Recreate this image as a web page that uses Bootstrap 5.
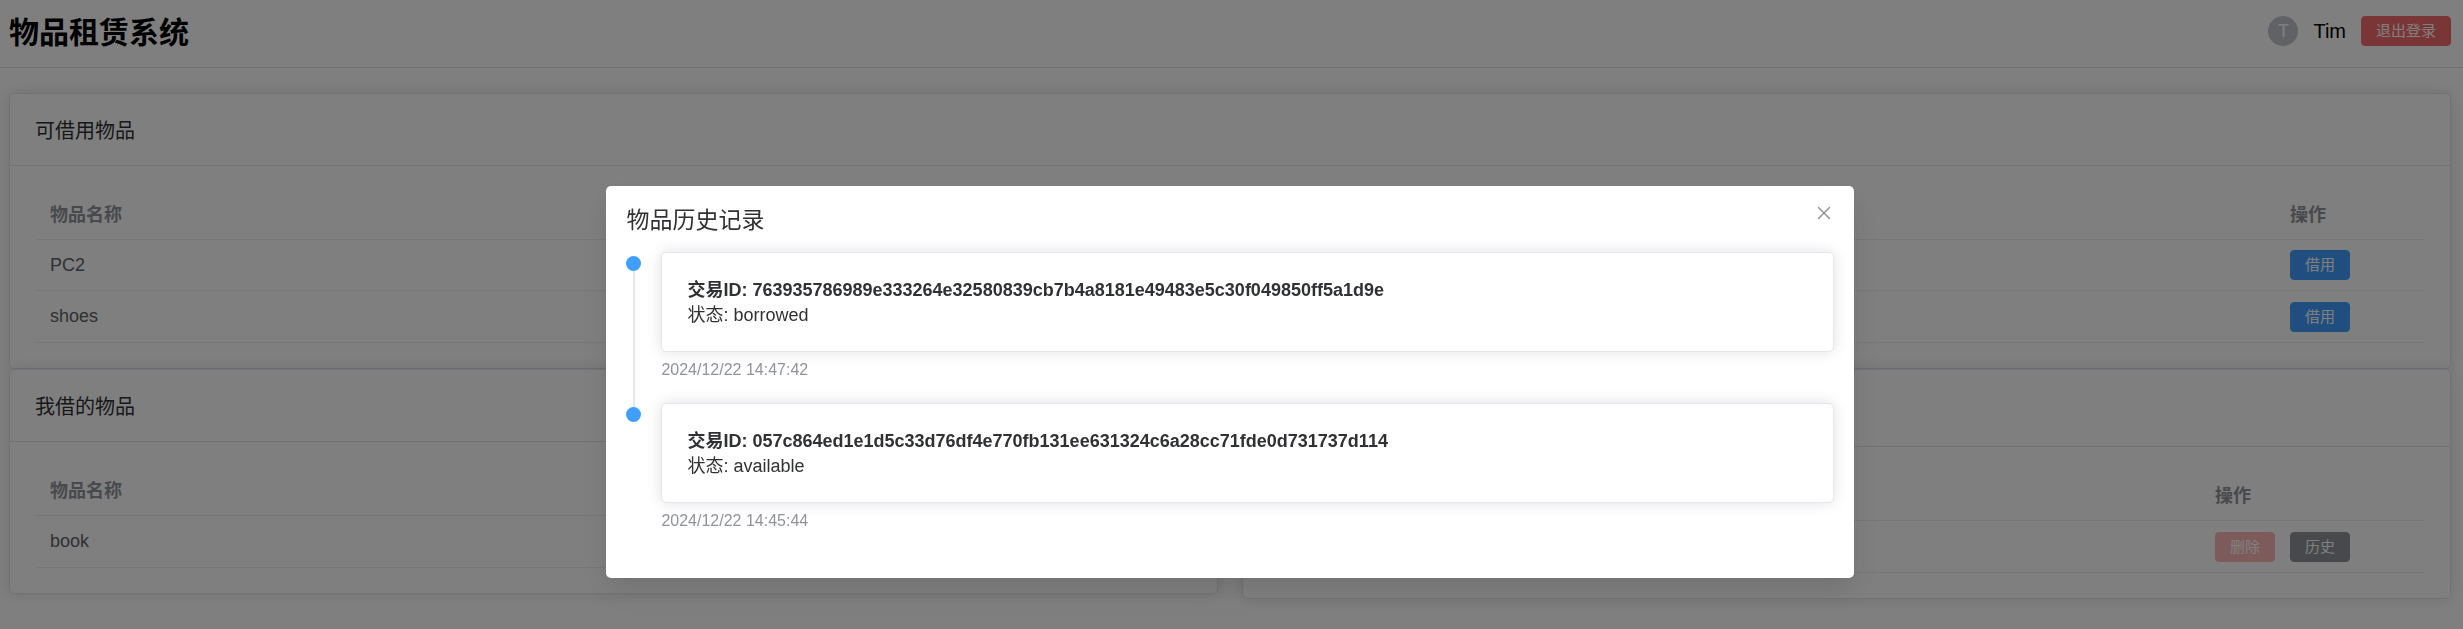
<!DOCTYPE html>
<html lang="zh-CN">
<head>
<meta charset="utf-8">
<meta name="viewport" content="width=device-width, initial-scale=1">
<title>物品租赁系统</title>
<link href="https://cdn.jsdelivr.net/npm/bootstrap@5.3.0/dist/css/bootstrap.min.css" rel="stylesheet">
<style>
  body { font-family: "Liberation Sans", "Noto Sans CJK SC", sans-serif; font-size: 18px; line-height: 25px; color: #303133; background: #fff; }
  .site-bar { height: 68px; padding: 0 12px 5px 9px; border-bottom: 1px solid #dcdfe6; }
  .site-title { font-size: 30px; line-height: 40px; color: #000; }
  .user-box { gap: 15px; }
  .user-name { font-size: 20px; color: #000; }
  .avatar { width: 30px; height: 30px; background: #c0c4cc; color: #fff; font-size: 18px; }
  .page-main { padding: 25px 12px 10px 9px; }
  .panel { border: 1px solid #e4e7ed; border-radius: 5px; box-shadow: 0 0 15px rgba(0,0,0,.12); background: #fff; }
  .panel-head { min-height: 72px; padding: 4px 25px 0; font-size: 20px; border-bottom: 1px solid #e4e7ed; }
  .panel-head-tall { min-height: 77px; }
  .panel-body { padding: 25px; }
  .btn-mini { height: 30px; padding: 0 14px; font-size: 15px; line-height: 28px; border-radius: 4px; border: 1px solid; color: #fff; }
  .btn-red { background: #f56c6c; border-color: #f56c6c; }
  .btn-blue { background: #409eff; border-color: #409eff; }
  .btn-gray { background: #909399; border-color: #909399; }
  .btn-red:disabled { background: #fab6b6; border-color: #fab6b6; color: #fff; opacity: 1; }
  .items { table-layout: fixed; border-collapse: separate; border-spacing: 0; border-color: #ebeef5; }
  .items th, .items td { padding: 0 15px; vertical-align: middle; color: #606266; }
  .items thead th, .items thead td { height: 49px; color: #909399; }
  .items tbody td { height: 51px; }
  .items tbody tr:last-child td { height: 52px; }
  .col-one { width: 150px; }
  .col-two { width: 225px; }
  .actions { gap: 15px; }
  .shade { background: rgba(0,0,0,.5); padding-right: 3px; }
  .history-dialog { width: 50.7%; max-width: none; margin: 186px auto 20px; }
  .history-box { border: 0; border-radius: 5px; padding: 20px 20px 24px; box-shadow: 0 15px 40px 5px rgba(0,0,0,.04), 0 10px 25px rgba(0,0,0,.08); }
  .history-title { font-size: 23px; line-height: 28px; margin-bottom: 18px; }
  .close-x { width: 20px; height: 20px; margin: -3px 0 0; color: #909399; }
  .step { gap: 20px; }
  .rail { width: 15px; padding-top: 4px; margin-bottom: -4px; }
  .dot { width: 15px; height: 15px; background: #409eff; }
  .rail-line { width: 2px; background: #e4e7ed; }
  .step-main { padding-bottom: 25px; }
  .record { padding: 25px 25px 23px; }
  .stamp { margin-top: 10px; font-size: 16px; line-height: 16px; color: #909399; }
</style>
</head>
<body>
<header class="site-bar d-flex align-items-center justify-content-between">
  <h1 class="site-title fw-bold m-0 pt-1">物品租赁系统</h1>
  <div class="user-box d-flex align-items-center">
    <span class="avatar rounded-circle d-flex align-items-center justify-content-center">T</span>
    <span class="user-name">Tim</span>
    <button type="button" class="btn btn-mini btn-red">退出登录</button>
  </div>
</header>

<main class="page-main">
  <section class="panel">
    <div class="panel-head d-flex align-items-center">可借用物品</div>
    <div class="panel-body">
      <table class="table items mb-0">
        <thead><tr><th scope="col">物品名称</th><th scope="col" class="col-one">操作</th></tr></thead>
        <tbody>
          <tr><td>PC2</td><td><button type="button" class="btn btn-mini btn-blue d-block">借用</button></td></tr>
          <tr><td>shoes</td><td><button type="button" class="btn btn-mini btn-blue d-block">借用</button></td></tr>
        </tbody>
      </table>
    </div>
  </section>

  <div class="row align-items-start gx-4">
    <div class="col-6">
      <section class="panel">
        <div class="panel-head d-flex align-items-center">我借的物品</div>
        <div class="panel-body">
          <table class="table items mb-0">
            <thead><tr><th scope="col">物品名称</th></tr></thead>
            <tbody><tr><td>book</td></tr></tbody>
          </table>
        </div>
      </section>
    </div>
    <div class="col-6">
      <section class="panel">
        <div class="panel-head panel-head-tall"></div>
        <div class="panel-body">
          <table class="table items mb-0">
            <thead><tr><td></td><th scope="col" class="col-two">操作</th></tr></thead>
            <tbody><tr><td></td><td>
              <div class="actions d-flex">
                <button type="button" class="btn btn-mini btn-red" disabled>删除</button>
                <button type="button" class="btn btn-mini btn-gray">历史</button>
              </div>
            </td></tr></tbody>
          </table>
        </div>
      </section>
    </div>
  </div>
</main>

<div class="modal d-block shade" role="dialog" aria-modal="true" aria-labelledby="historyTitle">
  <div class="modal-dialog history-dialog">
    <div class="modal-content history-box">
      <div class="d-flex justify-content-between align-items-start">
        <h2 class="history-title fw-normal" id="historyTitle">物品历史记录</h2>
        <button type="button" class="close-x btn p-0 border-0 d-flex" aria-label="关闭">
          <svg width="20" height="20" viewBox="0 0 20 20" fill="none" stroke="currentColor" stroke-width="1.5" stroke-linecap="round"><path d="M4.5 4.5l11 11M15.500 4.500L4.500 15.500"/></svg>
        </button>
      </div>
      <div class="step d-flex">
        <div class="rail d-flex flex-column align-items-center flex-shrink-0"><span class="dot rounded-circle"></span><span class="rail-line flex-grow-1"></span></div>
        <div class="step-main flex-grow-1">
          <div class="panel record">
            <div class="fw-bold">交易ID: 763935786989e333264e32580839cb7b4a8181e49483e5c30f049850ff5a1d9e</div>
            <div>状态: borrowed</div>
          </div>
          <div class="stamp">2024/12/22 14:47:42</div>
        </div>
      </div>
      <div class="step d-flex">
        <div class="rail flex-shrink-0"><span class="dot rounded-circle d-block"></span></div>
        <div class="step-main flex-grow-1">
          <div class="panel record">
            <div class="fw-bold">交易ID: 057c864ed1e1d5c33d76df4e770fb131ee631324c6a28cc71fde0d731737d114</div>
            <div>状态: available</div>
          </div>
          <div class="stamp">2024/12/22 14:45:44</div>
        </div>
      </div>
    </div>
  </div>
</div>
<script src="https://cdn.jsdelivr.net/npm/bootstrap@5.3.0/dist/js/bootstrap.bundle.min.js"></script>
</body>
</html>
